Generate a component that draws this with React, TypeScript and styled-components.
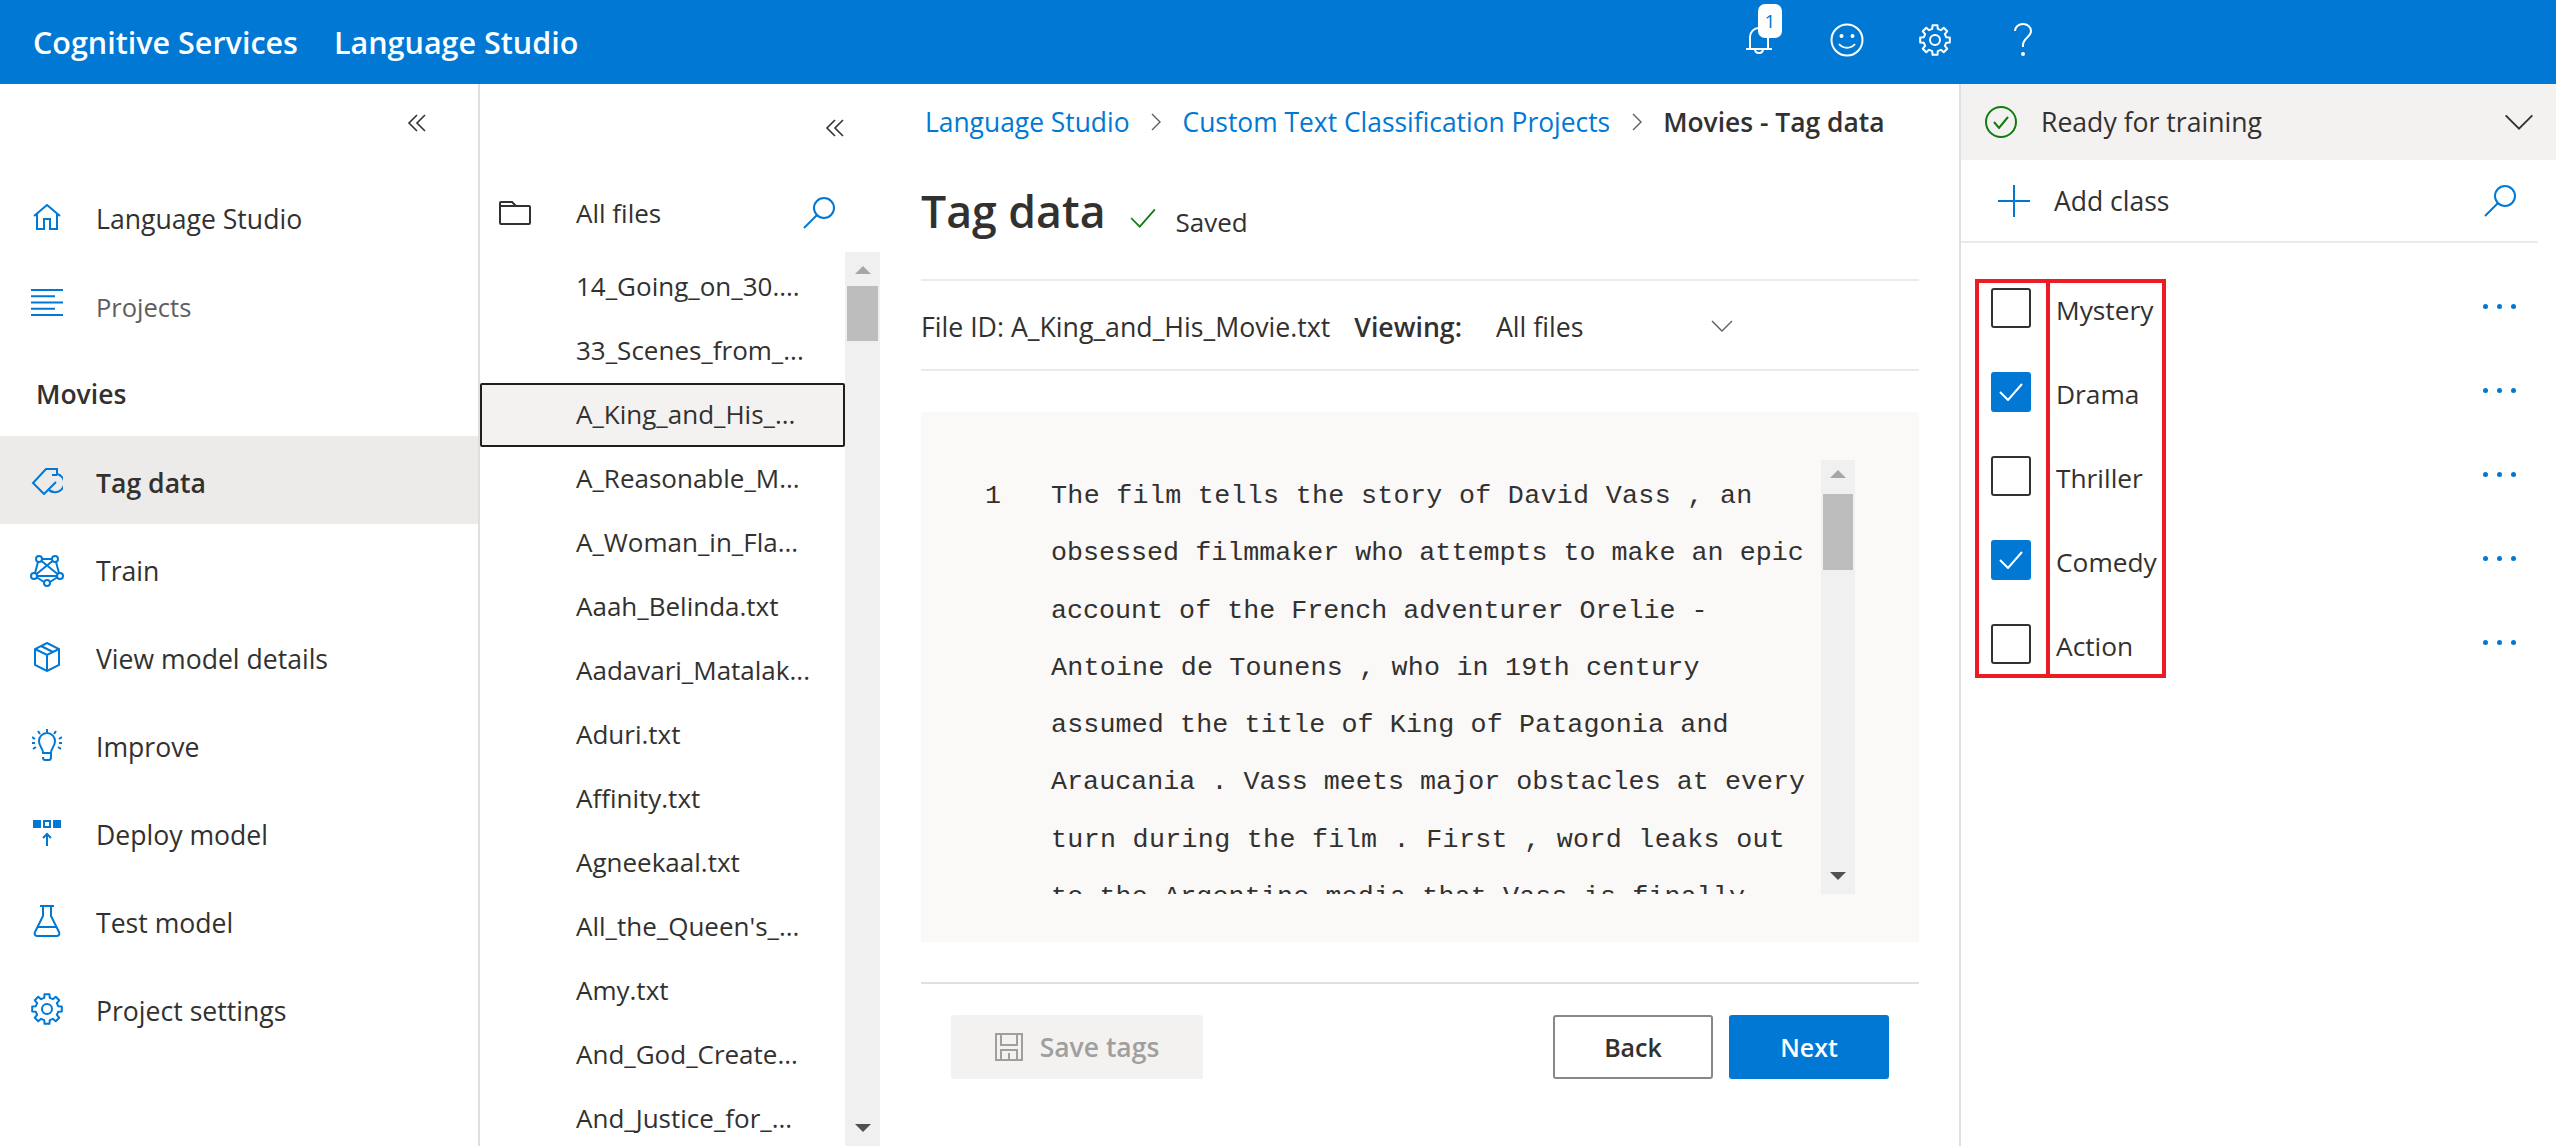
import { FC, ReactNode } from "react"
import styled, { createGlobalStyle } from "styled-components"

const Global = createGlobalStyle`
  html, body { margin: 0; padding: 0; background: #fff; }
  body { font-family: "Open Sans", "Noto Sans", sans-serif; color: #323130; overflow: hidden; }
  * { box-sizing: border-box; }
`

const Page = styled.div`
  width: 2556px;
  height: 1146px;
  display: flex;
  flex-direction: column;
  overflow: hidden;
`
const TopBar = styled.header`
  height: 84px;
  flex: none;
  background: #0078d4;
  display: flex;
  align-items: center;
  padding: 0 0 0 33px;
  color: #fff;
  font-size: 30.5px;
  font-weight: 600;
`
const BrandLink = styled.span<{ $gap?: number }>`
  margin-right: ${({ $gap }) => $gap ?? 0}px;
`
const TopIcons = styled.div`
  margin-left: auto;
  width: 841px;
  display: flex;
  align-items: center;
`
const TopIcon = styled.div`
  width: 88px;
  height: 84px;
  padding-bottom: 4px;
  display: flex;
  align-items: center;
  justify-content: center;
  position: relative;
`
const Badge = styled.span`
  position: absolute;
  left: 43px;
  top: 4px;
  width: 24px;
  height: 34px;
  background: #fff;
  border-radius: 7px;
  color: #0078d4;
  font-size: 19px;
  font-weight: 400;
  display: flex;
  align-items: center;
  justify-content: center;
`
const Body = styled.div`
  flex: 1;
  display: flex;
  min-height: 0;
`
const Nav = styled.nav`
  width: 480px;
  flex: none;
  border-right: 2px solid #e1dfdd;
  display: flex;
  flex-direction: column;
`
const CollapseRow = styled.div<{ $height: number; $pad: number; $top?: number; $bottom?: number }>`
  height: ${({ $height }) => $height}px;
  display: flex;
  align-items: center;
  justify-content: flex-end;
  padding: ${({ $top }) => $top ?? 0}px ${({ $pad }) => $pad}px ${({ $bottom }) => $bottom ?? 0}px 0;
  flex: none;
`
const NavItem = styled.div<{ $active?: boolean; $muted?: boolean; $low?: boolean }>`
  height: 88px;
  display: flex;
  align-items: center;
  width: 478px;
  flex: none;
  padding-top: ${({ $low }) => ($low ? 2 : 0)}px;
  font-size: ${({ $muted }) => ($muted ? 25.5 : 26.6)}px;
  color: ${({ $muted }) => ($muted ? "#605e5c" : "#323130")};
  font-weight: ${({ $active }) => ($active ? 600 : 400)};
  background: ${({ $active }) => ($active ? "#edebe9" : "transparent")};
`
const NavLabel = styled.span<{ $low?: boolean }>`
  margin-top: ${({ $low }) => ($low ? 4 : 0)}px;
`
const NavIcon = styled.span<{ $lift?: number }>`
  width: 96px;
  padding: 0 2px ${({ $lift }) => $lift ?? 0}px 0;
  flex: none;
  display: flex;
  align-items: center;
  justify-content: center;
`
const NavHeading = styled.div`
  height: 85px;
  padding-left: 36px;
  display: flex;
  align-items: center;
  font-size: 26.5px;
  font-weight: 600;
`
const FilesColumn = styled.aside`
  width: 400px;
  flex: none;
  display: flex;
  flex-direction: column;
`
const FilesHead = styled.div`
  height: 84px;
  flex: none;
  display: flex;
  align-items: center;
  padding: 5px 45px 0 19px;
  font-size: 26px;
`
const FolderSlot = styled.span`
  width: 77px;
  display: flex;
`
const PushRight = styled.span`
  margin-left: auto;
  display: flex;
`
const FilesScroller = styled.div`
  flex: 1;
  display: flex;
  min-height: 0;
`
const FileList = styled.div`
  flex: 1;
  padding-top: 3px;
  overflow: hidden;
`
const FileRow = styled.div<{ $selected?: boolean }>`
  height: 64px;
  display: flex;
  align-items: center;
  padding: 0 0 2px 96px;
  font-size: 26px;
  white-space: nowrap;
  ${({ $selected }) =>
    $selected &&
    `
    background: #f3f2f1;
    outline: 2px solid #201f1e;
    outline-offset: -2px;
    border-radius: 2px;
  `}
`
const ScrollTrack = styled.div<{ $width: number }>`
  width: ${({ $width }) => $width}px;
  flex: none;
  background: #f0f0f0;
  display: flex;
  flex-direction: column;
  align-items: center;
  justify-content: space-between;
  position: relative;
`
const ArrowUp = styled.div<{ $margin: number }>`
  width: 0;
  height: 0;
  border-left: 8px solid transparent;
  border-right: 8px solid transparent;
  border-bottom: 8px solid #a6a6a6;
  margin-top: ${({ $margin }) => $margin}px;
  flex: none;
`
const ArrowDown = styled.div<{ $margin: number }>`
  width: 0;
  height: 0;
  border-left: 8px solid transparent;
  border-right: 8px solid transparent;
  border-top: 8px solid #505050;
  margin-bottom: ${({ $margin }) => $margin}px;
  flex: none;
`
const ScrollThumb = styled.div<{ $top: number; $height: number }>`
  position: absolute;
  top: ${({ $top }) => $top}px;
  left: 2px;
  right: 2px;
  height: ${({ $height }) => $height}px;
  background: #bdbdbd;
`
const Main = styled.main`
  width: 1080px;
  flex: none;
  padding: 0 41px;
  display: flex;
  flex-direction: column;
`
const Breadcrumbs = styled.div`
  height: 76px;
  flex: none;
  display: flex;
  align-items: center;
  padding-left: 4px;
  font-size: 26.4px;
  white-space: nowrap;
`
const Crumb = styled.span<{ $current?: boolean }>`
  color: ${({ $current }) => ($current ? "#323130" : "#0078d4")};
  font-weight: ${({ $current }) => ($current ? 600 : 400)};
`
const CrumbSep = styled.span`
  width: 53px;
  display: flex;
  justify-content: center;
`
const TitleRow = styled.div`
  height: 121px;
  flex: none;
  display: flex;
  align-items: center;
  border-bottom: 2px solid #edebe9;
  padding-bottom: 16px;
`
const Title = styled.h1`
  margin: 0 24px 0 0;
  font-size: 44.6px;
  font-weight: 600;
  line-height: 1;
`
const SavedMark = styled.span`
  margin-top: 12px;
  display: flex;
`
const SavedText = styled.span`
  font-size: 26px;
  margin-left: 20px;
  margin-top: 20px;
`
const ViewRow = styled.div`
  height: 90px;
  flex: none;
  display: flex;
  align-items: center;
  border-bottom: 2px solid #edebe9;
  font-size: 26.7px;
  padding-top: 2px;
  white-space: nowrap;
`
const ViewLabel = styled.span`
  font-weight: 600;
  margin-left: 24px;
`
const ViewValue = styled.span`
  margin-left: 34px;
  width: 215px;
`
const EditorPanel = styled.div`
  margin-top: 41px;
  height: 530px;
  flex: none;
  background: #faf9f8;
  padding: 48px 64px 48px 64px;
  display: flex;
`
const CodeLines = styled.div`
  flex: 1;
  overflow: hidden;
  padding-top: 8px;
  font-family: "Liberation Mono", monospace;
  font-size: 26.7px;
  line-height: 57.3px;
  white-space: nowrap;
  display: flex;
`
const LineNumber = styled.span`
  width: 66px;
  flex: none;
`
const CodeLine = styled.div<{ $extra: number }>`
  letter-spacing: ${({ $extra }) => $extra}px;
`
const EditorFooter = styled.div`
  margin-top: 40px;
  border-top: 2px solid #e1dfdd;
  padding: 31px 30px 0;
  display: flex;
  align-items: flex-start;
  gap: 16px;
`
const SaveButton = styled.div`
  width: 252px;
  height: 64px;
  border-radius: 3px;
  background: #f3f2f1;
  color: #a19f9d;
  display: flex;
  align-items: center;
  justify-content: center;
  gap: 17px;
  font-size: 26.5px;
  font-weight: 600;
  margin-right: auto;
`
const ActionButton = styled.div<{ $primary?: boolean }>`
  width: 160px;
  height: 64px;
  border-radius: 3px;
  display: flex;
  align-items: center;
  justify-content: center;
  font-size: 25px;
  font-weight: 600;
  background: ${({ $primary }) => ($primary ? "#0078d4" : "#fff")};
  color: ${({ $primary }) => ($primary ? "#fff" : "#323130")};
  border: 2px solid ${({ $primary }) => ($primary ? "#0078d4" : "#8a8886")};
`
const Side = styled.aside`
  flex: 1;
  border-left: 2px solid #e1dfdd;
  display: flex;
  flex-direction: column;
  margin-left: -1px;
`
const StatusBar = styled.div`
  height: 76px;
  flex: none;
  background: #f3f2f1;
  display: flex;
  align-items: center;
  padding: 0 22px 0 24px;
  font-size: 26.6px;
  gap: 24px;
`
const AddRow = styled.div`
  height: 83px;
  flex: none;
  margin-right: 18px;
  border-bottom: 2px solid #edebe9;
  display: flex;
  align-items: center;
  padding: 0 22px 0 37px;
  font-size: 26.5px;
  gap: 24px;
`
const ClassList = styled.div`
  position: relative;
  padding-top: 25px;
`
const ClassRow = styled.div`
  height: 84px;
  display: flex;
  align-items: flex-start;
  padding-left: 30px;
  font-size: 26.3px;
`
const Box = styled.div<{ $checked?: boolean }>`
  width: 40px;
  height: 40px;
  flex: none;
  margin-top: 20px;
  border-radius: 3px;
  border: 2px solid ${({ $checked }) => ($checked ? "#0078d4" : "#323130")};
  background: ${({ $checked }) => ($checked ? "#0078d4" : "#fff")};
  display: flex;
  align-items: center;
  justify-content: center;
`
const ClassName = styled.span`
  margin-left: 25px;
  margin-top: 22px;
  line-height: 40px;
`
const MoreDots = styled.span`
  margin-left: auto;
  margin-right: 40px;
  margin-top: 36px;
  display: flex;
  gap: 9px;
`
const Dot = styled.i`
  width: 5px;
  height: 5px;
  border-radius: 50%;
  background: #0078d4;
`
// the red annotation frames drawn on top of the list
const Frame = styled.div<{ $left: number; $width: number }>`
  position: absolute;
  top: 36px;
  left: ${({ $left }) => $left}px;
  width: ${({ $width }) => $width}px;
  height: 399px;
  border: 4px solid #ed1c24;
  pointer-events: none;
`

const Svg: FC<{ w: number; h?: number; vb?: string; children: ReactNode; c?: string; sw?: number }> = ({
  w,
  h,
  vb,
  children,
  c = "#0078d4",
  sw = 2,
}) => (
  <svg
    width={w}
    height={h ?? w}
    viewBox={vb ?? `0 0 ${w} ${h ?? w}`}
    fill="none"
    stroke={c}
    strokeWidth={sw}
    style={{ display: "block", flex: "none" }}
  >
    {children}
  </svg>
)

const gearPath = (cx: number, cy: number, r1: number, r2: number) => {
  const pts: string[] = []
  const n = 8
  for (let i = 0; i < n; i++) {
    const a = (i / n) * Math.PI * 2
    const step = Math.PI / n
    const p = (ang: number, r: number) => `${(cx + Math.cos(ang) * r).toFixed(2)} ${(cy + Math.sin(ang) * r).toFixed(2)}`
    pts.push(`${i ? "L" : "M"}${p(a - step * 0.42, r2)}`)
    pts.push(`L${p(a + step * 0.42, r2)}`)
    pts.push(`L${p(a + step * 0.62, r1)}`)
    pts.push(`L${p(a + step * 1.38, r1)}`)
  }
  return pts.join(" ") + " Z"
}

const HomeIcon = () => (
  <Svg w={28} h={26}>
    <path d="M1 12 14 1l13 11" />
    <path d="M4 10v15h7V15h6v10h7V10" />
  </Svg>
)
const ListIcon = () => (
  <Svg w={32} h={27}>
    <path d="M0 1h32M0 7.25h24M0 13.5h32M0 19.75h24M0 26h32" />
  </Svg>
)
const TagIcon = () => (
  <Svg w={32} h={28}>
    <path d="M26 8V2H15L2 16l11 11 12-12" />
    <path d="M21 8h5" />
    <path d="M26 7A9.2 9.2 0 1 1 17 22" />
  </Svg>
)
const TrainIcon = () => (
  <Svg w={34} h={35}>
    <circle cx="9" cy="7" r="3" />
    <circle cx="25" cy="7" r="3" />
    <circle cx="4" cy="24" r="3" />
    <circle cx="30" cy="24" r="3" />
    <circle cx="17" cy="31" r="3" />
    <path d="M12 7h10M8 10 5 21M26 10l3 11M7 25.500 14 30M27 25.500 20 30M7 24h20M11.500 9 27.500 22M22.500 9 6.500 22" />
  </Svg>
)
const CubeIcon = () => (
  <Svg w={26} h={30}>
    <path d="M13 1 25 7v16l-12 6L1 23V7z" />
    <path d="M1 7l12 6 12-6M13 13v16M7 4l12 6" />
  </Svg>
)
const BulbIcon = () => (
  <Svg w={30} h={32}>
    <path d="M11 24c0-5-4-6-4-12a8 8 0 0 1 16 0c0 6-4 7-4 12z" />
    <path d="M11 28c0 2 1 3 2 3h4c1 0 2-1 2-3v-4" />
    <path d="M15 0v3M6 2l2 3M24 2l-2 3M0 8l3 2M30 8l-3 2M0 14h3M27 14h3M1 20l3-2M29 20l-3-2" />
  </Svg>
)
const DeployIcon = () => (
  <Svg w={28} h={26} sw={0}>
    <rect x="0" y="0" width="8" height="8" fill="#0078d4" />
    <rect x="11" y="1" width="6" height="6" stroke="#0078d4" strokeWidth="2" />
    <rect x="20" y="0" width="8" height="8" fill="#0078d4" />
    <path d="M14 26V14M10 18l4-4 4 4" stroke="#0078d4" strokeWidth="2" />
  </Svg>
)
const FlaskIcon = () => (
  <Svg w={28} h={32}>
    <path d="M7 1h14M10 1v10L2 27c-1 2 0 4 2 4h20c2 0 3-2 2-4l-8-16V1" />
    <path d="M5 22h18" />
  </Svg>
)
const GearIcon: FC<{ c?: string; size?: number }> = ({ c = "#0078d4", size = 32 }) => (
  <Svg w={size} vb="0 0 32 32" c={c}>
    <path d={gearPath(16, 16, 11.5, 15)} strokeLinejoin="round" />
    <circle cx="16" cy="16" r="5" />
  </Svg>
)
const ChevronsLeft = () => (
  <Svg w={20} h={18} c="#323130" sw={1.6}>
    <path d="M10 1 2 9l8 8M18 1l-8 8 8 8" />
  </Svg>
)
const FolderIcon = () => (
  <Svg w={32} h={24} c="#323130">
    <path d="M1 22V2c0-.5.5-1 1-1h11l4 4h13c.5 0 1 .5 1 1v16c0 .5-.5 1-1 1H2c-.5 0-1-.5-1-1zM1 5h16" />
  </Svg>
)
const SearchIcon = () => (
  <Svg w={32}>
    <circle cx="21" cy="11" r="10" />
    <path d="M14 18 1 31" />
  </Svg>
)
const Chevron: FC<{ w?: number; c?: string }> = ({ w = 22, c = "#605e5c" }) => (
  <Svg w={w} h={w / 2 + 1} vb="0 0 22 12" c={c} sw={1.4}>
    <path d="M1 1l10 10L21 1" />
  </Svg>
)
const CrumbChevron = () => (
  <Svg w={10} h={18} c="#605e5c" sw={1.4}>
    <path d="M1 1l8 8-8 8" />
  </Svg>
)
const BellIcon = () => (
  <Svg w={26} h={27} c="#fff">
    <path d="M0 22h26M4 22V10a9 9 0 0 1 18 0v12M9 22c0 3 2 4 4 4s4-1 4-4" />
  </Svg>
)
const SmileIcon = () => (
  <Svg w={34} c="#fff">
    <circle cx="17" cy="17" r="15.5" />
    <circle cx="11.5" cy="13" r="1" fill="#fff" />
    <circle cx="22.5" cy="13" r="1" fill="#fff" />
    <path d="M9 21c4 5 12 5 16 0" />
  </Svg>
)
const HelpIcon = () => (
  <Svg w={20} h={34} c="#fff">
    <path d="M2 8a8 7 0 0 1 16 0c0 6-8 7-8 14v2" />
    <circle cx="10" cy="31" r="1" fill="#fff" />
  </Svg>
)
const CheckMark: FC<{ w?: number; h?: number; c?: string; sw?: number }> = ({ w = 24, h = 18, c = "#fff", sw = 2 }) => (
  <Svg w={w} h={h} vb="0 0 24 18" c={c} sw={sw}>
    <path d="M1 9l8 8L23 1" />
  </Svg>
)
const StatusCheck = () => (
  <Svg w={32} c="#107c10">
    <circle cx="16" cy="16" r="15" />
    <path d="M9 16l5 6 9-11" />
  </Svg>
)
const PlusIcon = () => (
  <Svg w={32} c="#0078d4">
    <path d="M16 0v32M0 16h32" />
  </Svg>
)
const SaveIcon = () => (
  <Svg w={28} h={28} c="#a19f9d">
    <path d="M1 1h26v26H1zM6 1v11h16V1M6 27V17h16v10M14 20v7" />
  </Svg>
)

const navTop = [
  { label: "Language Studio", icon: <HomeIcon />, lift: 5 },
  { label: "Projects", icon: <ListIcon />, muted: true, lift: 9 },
]
const navItems = [
  { label: "Tag data", icon: <TagIcon />, active: true },
  { label: "Train", icon: <TrainIcon /> },
  { label: "View model details", icon: <CubeIcon /> },
  { label: "Improve", icon: <BulbIcon /> },
  { label: "Deploy model", icon: <DeployIcon /> },
  { label: "Test model", icon: <FlaskIcon /> },
  { label: "Project settings", icon: <GearIcon /> },
]
const files = [
  "14_Going_on_30....",
  "33_Scenes_from_...",
  "A_King_and_His_...",
  "A_Reasonable_M...",
  "A_Woman_in_Fla...",
  "Aaah_Belinda.txt",
  "Aadavari_Matalak...",
  "Aduri.txt",
  "Affinity.txt",
  "Agneekaal.txt",
  "All_the_Queen's_...",
  "Amy.txt",
  "And_God_Create...",
  "And_Justice_for_...",
]
const code = [
  { text: "The film tells the story of David Vass , an", extra: 0.3 },
  { text: "obsessed filmmaker who attempts to make an epic", extra: 0 },
  { text: "account of the French adventurer Orelie -", extra: 0 },
  { text: "Antoine de Tounens , who in 19th century", extra: 0.2 },
  { text: "assumed the title of King of Patagonia and", extra: 0.12 },
  { text: "Araucania . Vass meets major obstacles at every", extra: 0.03 },
  { text: "turn during the film . First , word leaks out", extra: 0.3 },
  { text: "to the Argentine media that Vass is finally", extra: 0.13 },
]
const classes = [
  { name: "Mystery", checked: false },
  { name: "Drama", checked: true },
  { name: "Thriller", checked: false },
  { name: "Comedy", checked: true },
  { name: "Action", checked: false },
]

export default function App() {
  return (
    <Page>
      <Global />
      <TopBar>
        <BrandLink $gap={36}>Cognitive Services</BrandLink>
        <BrandLink>Language Studio</BrandLink>
        <TopIcons>
          <TopIcon>
            <BellIcon />
            <Badge>1</Badge>
          </TopIcon>
          <TopIcon>
            <SmileIcon />
          </TopIcon>
          <TopIcon>
            <GearIcon c="#fff" />
          </TopIcon>
          <TopIcon>
            <HelpIcon />
          </TopIcon>
        </TopIcons>
      </TopBar>
      <Body>
        <Nav>
          <CollapseRow $height={91} $pad={51} $bottom={14}>
            <ChevronsLeft />
          </CollapseRow>
          {navTop.map((n) => (
            <NavItem key={n.label} $muted={n.muted}>
              <NavIcon $lift={n.lift}>{n.icon}</NavIcon>
              <NavLabel>{n.label}</NavLabel>
            </NavItem>
          ))}
          <NavHeading>Movies</NavHeading>
          {navItems.map((n) => (
            <NavItem key={n.label} $active={n.active} $low>
              <NavIcon>{n.icon}</NavIcon>
              <NavLabel $low>{n.label}</NavLabel>
            </NavItem>
          ))}
        </Nav>
        <FilesColumn>
          <CollapseRow $height={84} $pad={35} $top={4}>
            <ChevronsLeft />
          </CollapseRow>
          <FilesHead>
            <FolderSlot>
              <FolderIcon />
            </FolderSlot>
            All files
            <PushRight>
              <SearchIcon />
            </PushRight>
          </FilesHead>
          <FilesScroller>
            <FileList>
              {files.map((f) => (
                <FileRow key={f} $selected={f.startsWith("A_King")}>
                  {f}
                </FileRow>
              ))}
            </FileList>
            <ScrollTrack $width={35}>
              <ArrowUp $margin={14} />
              <ScrollThumb $top={34} $height={55} />
              <ArrowDown $margin={14} />
            </ScrollTrack>
          </FilesScroller>
        </FilesColumn>
        <Main>
          <Breadcrumbs>
            <Crumb>Language Studio</Crumb>
            <CrumbSep>
              <CrumbChevron />
            </CrumbSep>
            <Crumb>Custom Text Classification Projects</Crumb>
            <CrumbSep>
              <CrumbChevron />
            </CrumbSep>
            <Crumb $current>Movies - Tag data</Crumb>
          </Breadcrumbs>
          <TitleRow>
            <Title>Tag data</Title>
            <SavedMark>
              <CheckMark w={26} h={20} c="#107c10" sw={1.6} />
            </SavedMark>
            <SavedText>Saved</SavedText>
          </TitleRow>
          <ViewRow>
            File ID: A_King_and_His_Movie.txt
            <ViewLabel>Viewing:</ViewLabel>
            <ViewValue>All files</ViewValue>
            <Chevron />
          </ViewRow>
          <EditorPanel>
            <CodeLines>
              <LineNumber>1</LineNumber>
              <div>
                {code.map((l) => (
                  <CodeLine key={l.text} $extra={l.extra}>
                    {l.text}
                  </CodeLine>
                ))}
              </div>
            </CodeLines>
            <ScrollTrack $width={34}>
              <ArrowUp $margin={10} />
              <ScrollThumb $top={34} $height={76} />
              <ArrowDown $margin={14} />
            </ScrollTrack>
          </EditorPanel>
          <EditorFooter>
            <SaveButton>
              <SaveIcon />
              Save tags
            </SaveButton>
            <ActionButton>Back</ActionButton>
            <ActionButton $primary>Next</ActionButton>
          </EditorFooter>
        </Main>
        <Side>
          <StatusBar>
            <StatusCheck />
            Ready for training
            <PushRight>
              <Chevron w={30} c="#323130" />
            </PushRight>
          </StatusBar>
          <AddRow>
            <PlusIcon />
            Add class
            <PushRight>
              <SearchIcon />
            </PushRight>
          </AddRow>
          <ClassList>
            {classes.map((c) => (
              <ClassRow key={c.name}>
                <Box $checked={c.checked}>{c.checked && <CheckMark />}</Box>
                <ClassName>{c.name}</ClassName>
                <MoreDots>
                  <Dot />
                  <Dot />
                  <Dot />
                </MoreDots>
              </ClassRow>
            ))}
            <Frame $left={14} $width={75} />
            <Frame $left={85} $width={120} />
          </ClassList>
        </Side>
      </Body>
    </Page>
  )
}
